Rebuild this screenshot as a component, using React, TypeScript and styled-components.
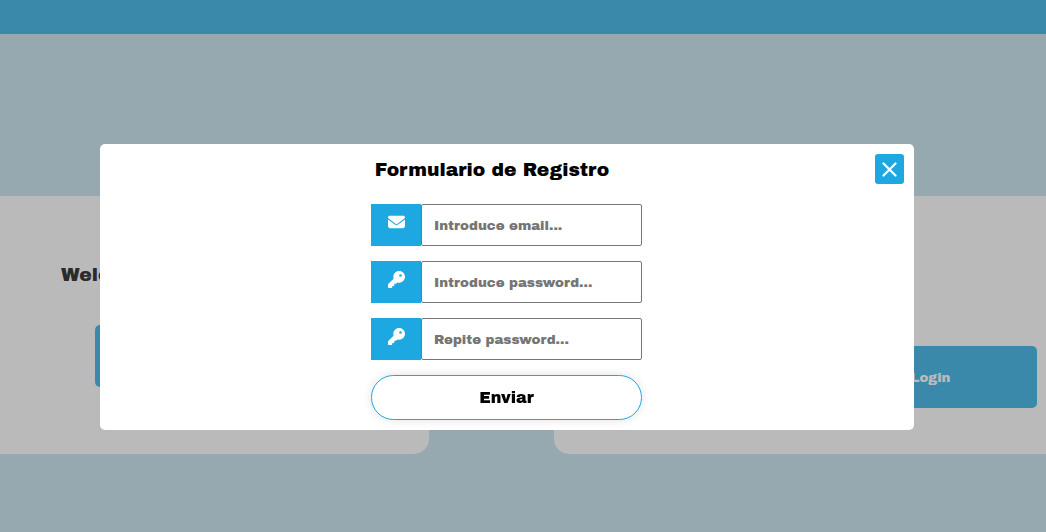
import React from "react";
import styled, { createGlobalStyle } from "styled-components";

const GlobalStyle = createGlobalStyle`
  * { box-sizing: border-box; }
  body {
    margin: 0;
    background: #96a8b0;
    font-family: "Archivo Black", Inter, "Liberation Sans", sans-serif;
    font-weight: 400;
  }
  button, input { font-family: inherit; font-weight: inherit; }
`;

const TopBar = styled.header`
  height: 34px;
  background: #3b89aa;
`;

const Main = styled.main`
  display: flex;
  justify-content: space-between;
  padding-top: 162px;
`;

const Card = styled.section<{ $side: "left" | "right" }>`
  width: ${(p) => (p.$side === "left" ? "41%" : "47%")};
  min-height: 258px;
  display: flex;
  flex-direction: column;
  align-items: ${(p) => (p.$side === "left" ? "flex-start" : "flex-end")};
  padding: ${(p) => (p.$side === "left" ? "67px 61px 0" : "150px 9px 0")};
  background: #bababa;
  border-radius: ${(p) => (p.$side === "left" ? "0 0 15px 0" : "0 0 0 15px")};
`;

const Welcome = styled.h3`
  margin: 0 0 38px;
  line-height: 24px;
  font-weight: 400;
  color: #2b2b2b;
`;

const CardButton = styled.button`
  width: 213px;
  height: 62px;
  border: 0;
  border-radius: 5px;
  background: #3b89aa;
  color: #bababa;
`;

const Indented = styled.div`
  padding-left: 34px;
`;

const Overlay = styled.div`
  position: fixed;
  inset: 0;
  padding: 144px 132px 0 100px;
`;

const Dialog = styled.div`
  padding: 10px 10px 10px 9px;
  border-radius: 5px;
  background: #fff;
`;

const DialogHeader = styled.div`
  display: flex;
  align-items: flex-start;
`;

const Title = styled.h3`
  flex: 1;
  margin: 0;
  text-align: center;
  line-height: 32px;
  font-weight: 400;
  color: #000;
`;

const CloseButton = styled.button`
  display: flex;
  align-items: center;
  justify-content: center;
  width: 29px;
  height: 30px;
  padding: 0;
  border: 0;
  border-radius: 3px;
  background: #1da8e2;
  color: #fff;
`;

const Form = styled.form`
  display: flex;
  flex-direction: column;
  gap: 15px;
  width: 271px;
  margin: 18px auto 0;
`;

const Field = styled.div`
  display: flex;
  height: 42px;
`;

const FieldLabel = styled.label`
  display: flex;
  justify-content: center;
  width: 50px;
  padding-top: 10px;
  background: #1da8e2;
  color: #fff;
`;

const Input = styled.input`
  flex: 1;
  min-width: 0;
  padding: 0 12px;
  border: 1px solid #767676;
  border-radius: 2px;
  background: #fff;
  &::placeholder { color: #757575; opacity: 1; }
`;

const SubmitButton = styled.button`
  height: 45px;
  border: 1px solid #1da8e2;
  border-radius: 23px;
  background: #fff;
  color: #000;
  font-size: 16px;
  box-shadow: 0 0 10px rgba(0, 0, 0, 0.12);
`;

const MailIcon = () => (
  <svg width="17" height="17" viewBox="0 0 512 512" fill="currentColor" aria-hidden="true">
    <path d="M48 50C21.500 50 0 71.500 0 98c0 15.100 7.100 29.300 19.200 38.400L236.800 299.600c11.400 8.500 27 8.500 38.400 0L492.800 136.400C504.900 127.300 512 113.100 512 98c0-26.500-21.500-48-48-48H48zM0 162V362c0 35.300 28.700 64 64 64H448c35.300 0 64-28.700 64-64V162L294.400 325.200c-22.800 17.100-54 17.100-76.800 0L0 162z" />
  </svg>
);

const KeyIcon = () => (
  <svg width="17" height="17" viewBox="0 0 512 512" fill="currentColor" aria-hidden="true">
    <path d="M336 352c97.200 0 176-78.800 176-176S433.200 0 336 0S160 78.800 160 176c0 18.700 2.900 36.800 8.300 53.700L7 391c-4.500 4.500-7 10.600-7 17v80c0 13.300 10.700 24 24 24h80c13.300 0 24-10.700 24-24V448h40c13.300 0 24-10.700 24-24V384h40c6.400 0 12.500-2.500 17-7l33.300-33.300c16.900 5.400 35 8.300 53.700 8.300zM376 96a40 40 0 1 1 0 80 40 40 0 1 1 0-80z" />
  </svg>
);

const CloseIcon = () => (
  <svg width="15" height="15" viewBox="0 0 15 15" fill="none" stroke="currentColor" strokeWidth="2.200" strokeLinecap="round" aria-hidden="true">
    <path d="M1.500 1.500L13.500 13.500M13.500 1.500L1.500 13.500" />
  </svg>
);

const fields = [
  { id: "email", type: "email", text: "Introduce email...", Icon: MailIcon },
  { id: "password", type: "password", text: "Introduce password...", Icon: KeyIcon },
  { id: "repeat", type: "password", text: "Repite password...", Icon: KeyIcon },
];

export default function App() {
  return (
    <>
      <GlobalStyle />
      <TopBar />
      <Main>
        <Card $side="left">
          <Welcome>Welcome</Welcome>
          <Indented>
            <CardButton type="button" aria-label="Registro" />
          </Indented>
        </Card>
        <Card $side="right">
          <CardButton type="button">Login</CardButton>
        </Card>
      </Main>
      <Overlay>
        <Dialog role="dialog" aria-modal="true" aria-labelledby="dialog-title">
          <DialogHeader>
            <Title id="dialog-title">Formulario de Registro</Title>
            <CloseButton type="button" aria-label="Cerrar">
              <CloseIcon />
            </CloseButton>
          </DialogHeader>
          <Form onSubmit={(e) => e.preventDefault()}>
            {fields.map(({ id, type, text, Icon }) => (
              <Field key={id}>
                <FieldLabel htmlFor={id} aria-label={text}>
                  <Icon />
                </FieldLabel>
                <Input id={id} type={type} placeholder={text} />
              </Field>
            ))}
            <SubmitButton type="submit">Enviar</SubmitButton>
          </Form>
        </Dialog>
      </Overlay>
    </>
  );
}
